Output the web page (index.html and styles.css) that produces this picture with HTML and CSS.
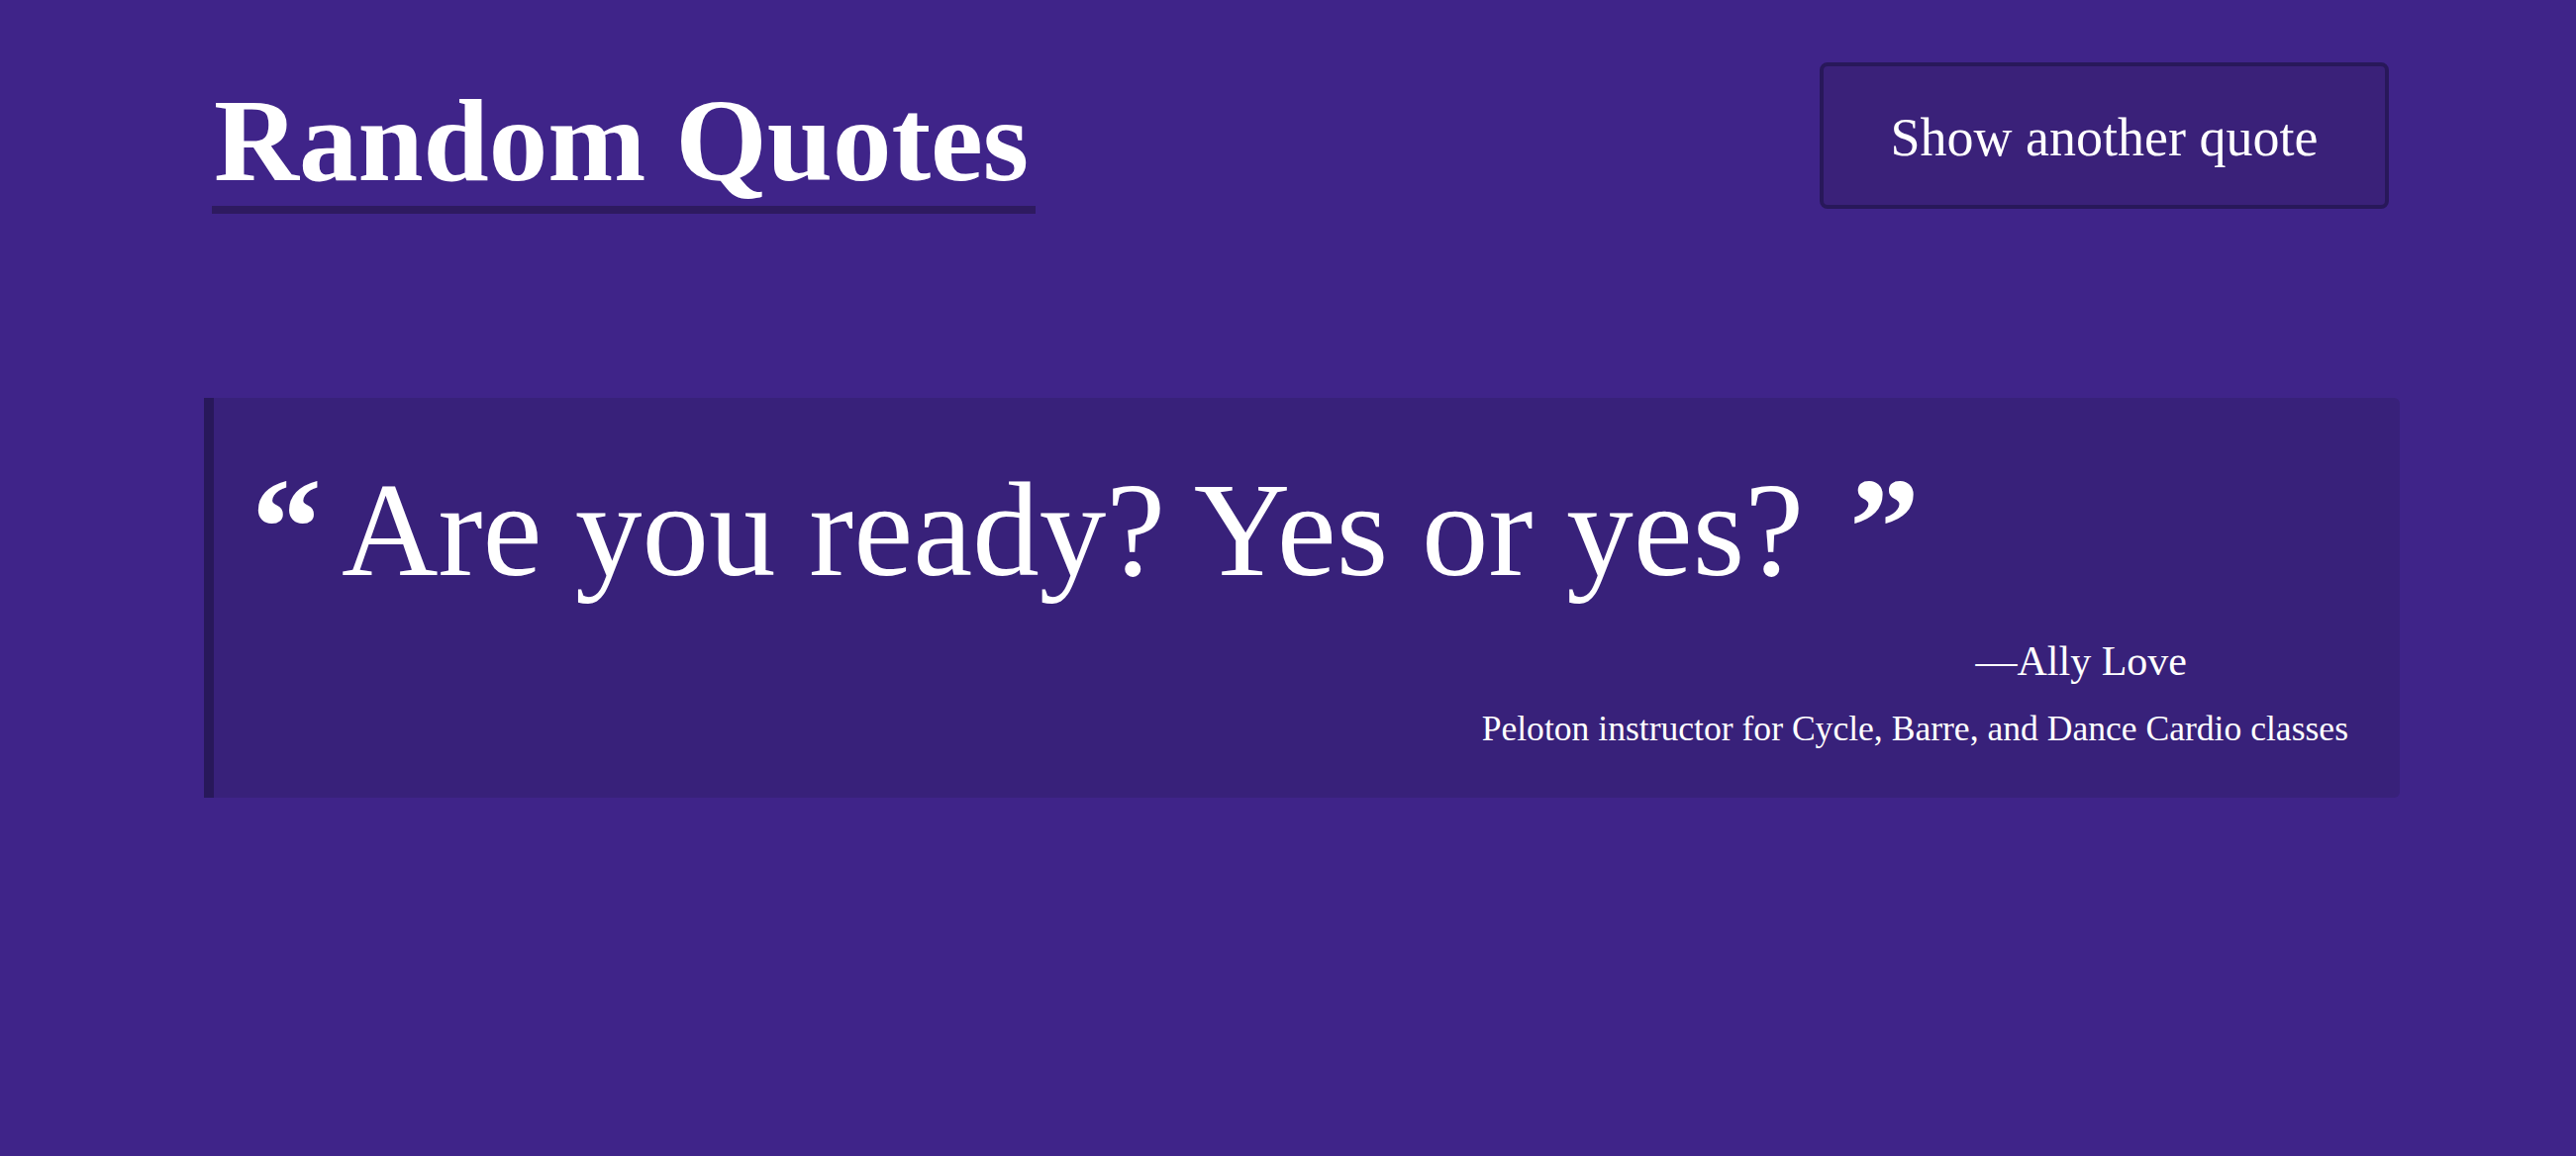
FILE: index.html
```html
<!DOCTYPE html>
<html lang="en">
<head>
<meta charset="utf-8">
<title>Random Quotes</title>
<link rel="stylesheet" href="styles.css">
</head>
<body>
<main class="page">
  <header class="top">
    <h1 class="title">Random Quotes</h1>
    <button class="next-btn" type="button">Show another quote</button>
  </header>
  <blockquote class="quote-card">
    <p class="quote-text"><span class="qmark qmark-open">&ldquo;</span>Are you ready? Yes or yes?<span class="qmark qmark-close">&rdquo;</span></p>
    <footer class="quote-meta">
      <div class="author">&mdash;Ally Love</div>
      <div class="role">Peloton instructor for Cycle, Barre, and Dance Cardio classes</div>
    </footer>
  </blockquote>
</main>
</body>
</html>
```

FILE: styles.css
```css
html, body {
  margin: 0;
  padding: 0;
}

body {
  background: #3f2489;
  color: #ffffff;
  font-family: "Liberation Serif", "Times New Roman", serif;
  min-height: 1168px;
}

.page {
  padding: 63px 178px 0 206px;
}

.top {
  display: flex;
  justify-content: space-between;
  align-items: flex-start;
}

.title {
  margin: 20px 0 0 8px;
  padding: 0 7px 6px 2px;
  font-size: 119px;
  line-height: 1;
  font-weight: 700;
  border-bottom: 8px solid #2e1a60;
}

.next-btn {
  margin: 0 11px 0 0;
  width: 575px;
  height: 148px;
  box-sizing: border-box;
  padding: 4px 0 0 0;
  display: flex;
  align-items: center;
  justify-content: center;
  background: #3a2179;
  color: #ffffff;
  border: 4px solid #28185a;
  border-radius: 8px;
  font-family: "Liberation Serif", "Times New Roman", serif;
  font-size: 54px;
  line-height: 1;
  cursor: pointer;
}

.quote-card {
  margin: 186px 0 0 0;
  padding: 66px 52px 51px 38px;
  background: #38217a;
  border-left: 10px solid #28185a;
  border-radius: 0 6px 6px 0;
}

.quote-text {
  margin: 0;
  font-size: 135px;
  line-height: 1;
  white-space: nowrap;
}

.qmark {
  font-weight: 700;
  font-size: 142px;
  line-height: 0;
}

.qmark-open {
  margin-right: 20px;
}

.qmark-close {
  margin-left: 46px;
}

.quote-meta {
  display: flex;
  flex-direction: column;
  align-items: flex-end;
}

.author {
  margin: 44px 163px 0 0;
  font-size: 42px;
  line-height: 1;
}

.role {
  margin-top: 30px;
  font-size: 35.6px;
  line-height: 1;
}
```
